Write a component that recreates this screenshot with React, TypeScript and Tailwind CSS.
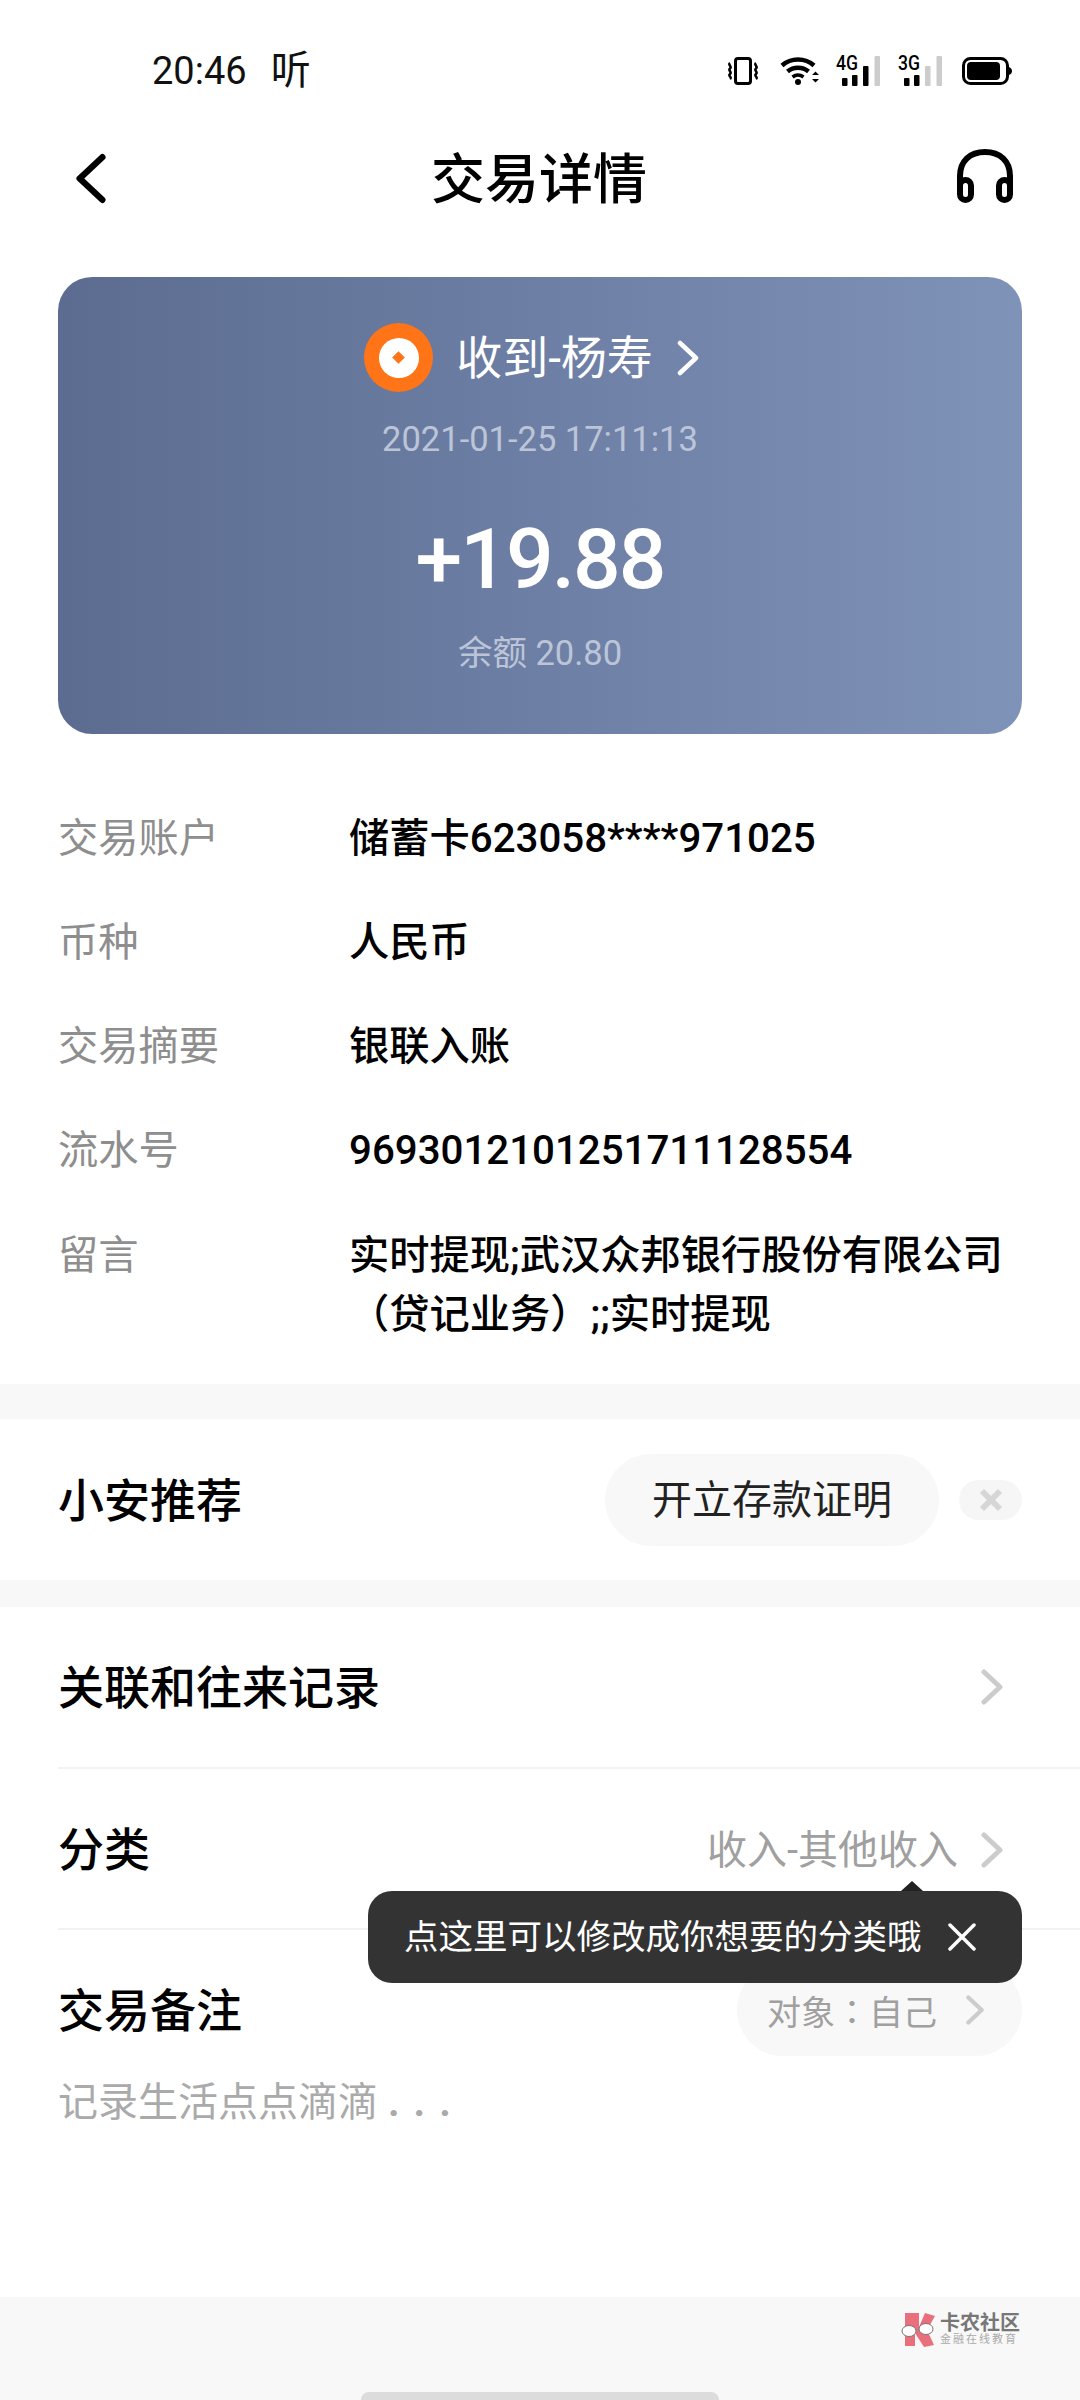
const detailRows = [
  { label: '交易账户', value: '储蓄卡623058****971025' },
  { label: '币种', value: '人民币' },
  { label: '交易摘要', value: '银联入账' },
  { label: '流水号', value: '9693012101251711128554' },
]

function Chevron({ className, stroke = 5 }: { className: string; stroke?: number }) {
  return (
    <svg viewBox="0 0 24 36" className={className} fill="none" stroke="currentColor" strokeWidth={stroke} strokeLinecap="round" strokeLinejoin="round">
      <path d="M4 3l16 15L4 33" />
    </svg>
  )
}

function Signal({ label, lit, className }: { label: string; lit: number; className: string }) {
  const bars = [
    { x: 6, y: 22, h: 8 },
    { x: 16, y: 19, h: 11 },
    { x: 27, y: 10, h: 20 },
    { x: 38.5, y: 0, h: 30 },
  ]
  return (
    <svg width="44" height="36" viewBox="0 -6 44 36" className={className}>
      <text x="0" y="14" fontFamily="Roboto, sans-serif" fontSize="20" fontWeight="500" textLength="22" lengthAdjust="spacingAndGlyphs">{label}</text>
      {bars.map((bar, i) => (
        <rect key={bar.x} x={bar.x} y={bar.y} width="5.5" height={bar.h} rx="1" fill={i < lit ? '#000' : '#cccccc'} />
      ))}
    </svg>
  )
}

function StatusIcons() {
  return (
    <div className="flex items-center">
      {/* vibrate */}
      <svg width="32" height="28" viewBox="0 0 32 28" fill="none" stroke="#000">
        <rect x="8.5" y="1.5" width="15" height="25" rx="2.5" strokeWidth="3" />
        <path d="M3 6c-2.500 2 2.500 3.500 0 5.500s2.500 3.500 0 5.500 2.500 3 0 5M29 6c-2.500 2 2.500 3.500 0 5.500s2.500 3.500 0 5.500 2.500 3 0 5" strokeWidth="2.5" />
      </svg>
      {/* wifi */}
      <svg width="40" height="28" viewBox="0 0 40 28" className="ml-[21px]" fill="none" stroke="#000" strokeWidth="4.5">
        <path d="M2 8.500c9-8 23-8 32 0M7.500 14.500c6-5 15-5 21 0" />
        <path d="M12.500 20c3.500-2.500 7.500-2.500 11 0" strokeWidth="3.5" />
        <circle cx="18" cy="25" r="3" fill="#000" stroke="none" />
        <path d="M32 18l3.500-3.500 3.500 3.500zM32 22l3.500 3.500 3.500-3.500z" fill="#000" stroke="none" />
      </svg>
      <Signal label="4G" lit={3} className="ml-[16px] -mt-[6px]" />
      <Signal label="3G" lit={2} className="ml-[18px] -mt-[6px]" />
      {/* battery */}
      <svg width="50" height="28" viewBox="0 0 50 28" className="ml-[20px]" fill="none">
        <rect x="1.5" y="1.5" width="44" height="25" rx="7" stroke="#000" strokeWidth="3" />
        <rect x="5" y="5" width="33" height="18" rx="4" fill="#000" />
        <path d="M47 10c2 1 3 2 3 4s-1 3-3 4z" fill="#000" />
      </svg>
    </div>
  )
}

function Logo() {
  return (
    <div className="flex items-center gap-[5px]">
      <svg width="34" height="35" viewBox="0 0 34 35">
        <path d="M4 1h14v14l6-14 10 3-8 14 7 15-10 2-9-14v13H4z" fill="#e96f7c" />
        <ellipse cx="8" cy="19" rx="7" ry="5.5" fill="#fff" stroke="#777" strokeWidth="1" />
        <ellipse cx="25" cy="17" rx="7" ry="5.5" fill="#fff" stroke="#777" strokeWidth="1" />
      </svg>
      <div className="flex flex-col">
        <span className="text-[20px] leading-[20px] font-bold text-[#777777]">卡农社区</span>
        <span className="mt-[1px] text-[11px] leading-[12px] tracking-[2px] text-[#aaaaaa]">金融在线教育</span>
      </div>
    </div>
  )
}

export default function App() {
  return (
    <div className="relative w-[1080px] h-[2400px] overflow-hidden bg-white text-black font-['Roboto','Noto_Sans_CJK_SC',sans-serif]">
      {/* status bar */}
      <div className="flex items-center justify-between h-[142px] pl-[152px] pr-[68px]">
        <div className="flex items-center text-[38px] leading-none text-[#111111]">
          <span>20:46</span>
          <span className="ml-[24px] text-[40px]">听</span>
        </div>
        <StatusIcons />
      </div>

      {/* nav */}
      <div className="flex items-center h-[72px] pl-[74px] pr-[67px]">
        <div className="flex-1">
          <Chevron className="w-[34px] h-[51px] rotate-180 text-black" stroke={4.5} />
        </div>
        <span className="mt-[5px] mr-[9px] text-[54px] leading-none font-medium">交易详情</span>
        <div className="flex flex-1 justify-end">
          <svg width="56" height="54" viewBox="0 0 56 54" className="mb-[5px]" fill="none" stroke="#000" strokeWidth="6">
            <path d="M3 36V27C3 12 13 3 28 3s25 9 25 24v9" />
            <rect x="3" y="31" width="11" height="20" rx="5.5" />
            <rect x="42" y="31" width="11" height="20" rx="5.5" />
          </svg>
        </div>
      </div>

      {/* card */}
      <div className="mx-[58px] mt-[63px] h-[457px] rounded-[34px] bg-gradient-to-r from-[#5c6c91] to-[#7f92b8] flex flex-col items-center pt-[46px] text-white">
        <div className="flex items-center h-[69px] pr-[16px]">
          <div className="flex items-center justify-center w-[69px] h-[69px] rounded-full bg-[#ff7416]">
            <div className="flex items-center justify-center w-[40px] h-[40px] rounded-full bg-white">
              <div className="w-[9px] h-[9px] rotate-45 bg-[#ff7416]" />
            </div>
          </div>
          <span className="ml-[23px] text-[46px] leading-none">收到-杨寿</span>
          <Chevron className="ml-[23px] w-[24px] h-[36px] text-white" stroke={4.5} />
        </div>
        <div className="mt-[27px] text-[34.5px] leading-[40px] text-[#bcc5d8]">2021-01-25 17:11:13</div>
        <div className="mt-[51px] text-[84px] leading-[100px] font-medium tracking-[-2px]">+19.88</div>
        <div className="mt-[23px] text-[34.5px] leading-[40px] text-[#bcc5d8]">余额 20.80</div>
      </div>

      {/* details */}
      <div className="flex flex-col gap-[46px] px-[58px] pt-[76px] pb-[40px]">
        {detailRows.map((row) => (
          <div key={row.label} className="flex text-[40.25px] leading-[58px]">
            <span className="w-[291px] text-[#8e8e8e]">{row.label}</span>
            <span className="font-medium">{row.value}</span>
          </div>
        ))}
        <div className="flex text-[40.25px] leading-[59px]">
          <span className="w-[291px] text-[#8e8e8e]">留言</span>
          <span className="w-[670px] font-medium">实时提现;武汉众邦银行股份有限公司<br />（贷记业务）;;实时提现</span>
        </div>
      </div>

      <div className="h-[35px] bg-[#f8f8f8]" />

      {/* recommend */}
      <div className="flex items-center h-[161px] px-[58px]">
        <span className="mt-[2px] text-[46px] leading-none font-medium">小安推荐</span>
        <div className="ml-auto flex items-center justify-center w-[334px] h-[92px] pt-[3px] rounded-full bg-[#f8f8f8] text-[40px] text-[#222222]">开立存款证明</div>
        <div className="ml-[20px] flex items-center justify-center w-[63px] h-[40px] rounded-full bg-[#f6f6f6]">
          <svg width="24" height="24" viewBox="0 0 24 24" stroke="#d6d6d6" strokeWidth="6"><path d="M3 3l18 18M21 3L3 21" /></svg>
        </div>
      </div>

      <div className="h-[27px] bg-[#f8f8f8]" />

      {/* list */}
      <div className="flex items-center justify-between h-[162px] ml-[58px] pr-[76px] border-b-2 border-[#f2f2f2]">
        <span className="mt-[2px] text-[46px] leading-none font-medium">关联和往来记录</span>
        <Chevron className="w-[24px] h-[36px] text-[#cccccc]" />
      </div>
      <div className="flex items-center h-[161px] ml-[58px] pr-[76px] border-b-2 border-[#f2f2f2]">
        <span className="mt-[3px] text-[46px] leading-none font-medium">分类</span>
        <span className="ml-auto mt-[4px] text-[40px] leading-none text-[#a0a0a0]">收入-其他收入</span>
        <Chevron className="ml-[22px] mt-[2px] w-[24px] h-[36px] text-[#cccccc]" />
      </div>
      <div className="flex items-center justify-between h-[142px] pt-[34px] pb-[16px] px-[58px]">
        <span className="mt-[2px] text-[46px] leading-none font-medium">交易备注</span>
        <div className="flex items-center w-[285px] h-[92px] pl-[30px] rounded-full bg-[#f8f8f8] text-[34px] text-[#a0a0a0]">
          <span className="font-['Noto_Sans_CJK_TC',sans-serif]">对象：自己</span>
          <Chevron className="ml-[28px] w-[20px] h-[30px] text-[#cccccc]" />
        </div>
      </div>
      <div className="pl-[58px] mt-[2px] text-[40px] leading-[58px] text-[#aaaaaa]">
        记录生活点点滴滴<span className="ml-[10px] font-bold tracking-[14px]">...</span>
      </div>

      {/* bottom strip */}
      <div className="absolute bottom-0 inset-x-0 h-[103px] bg-[#f8f8f8]">
        <div className="flex justify-end pt-[15px] pr-[60px]">
          <Logo />
        </div>
        <div className="absolute bottom-0 left-[361px] w-[358px] h-[8px] rounded-t-full bg-[#dcdcdc]" />
      </div>

      {/* tooltip */}
      <div className="absolute left-[368px] top-[1891px] flex items-center w-[654px] h-[92px] pl-[36px] rounded-[24px] bg-[#333333] text-white">
        <div className="absolute -top-[10px] left-[533px] w-0 h-0 border-x-[11px] border-x-transparent border-b-[10px] border-b-[#222222]" />
        <span className="text-[34.5px] leading-none whitespace-nowrap">点这里可以修改成你想要的分类哦</span>
        <svg width="28" height="28" viewBox="0 0 28 28" className="ml-[26px]" stroke="#fff" strokeWidth="3.5" strokeLinecap="round"><path d="M2 2l24 24M26 2L2 26" /></svg>
      </div>
    </div>
  )
}
